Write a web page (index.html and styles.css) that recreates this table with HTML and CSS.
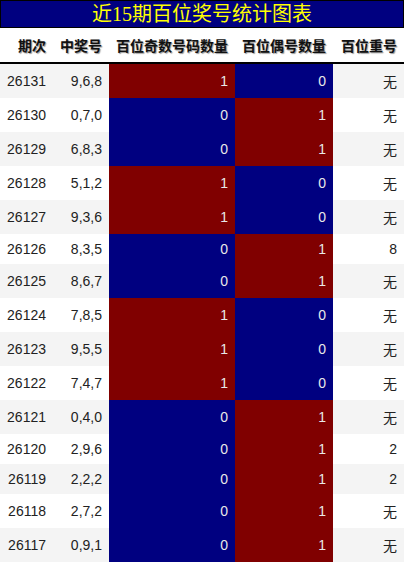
FILE: index.html
```html
<!DOCTYPE html>
<html lang="zh-CN">
<head>
  <meta charset="UTF-8">
  <meta name="viewport" content="width=device-width, initial-scale=1.0">
  <title>近15期百位奖号统计图表</title>
  <link rel="stylesheet" href="styles.css">
</head>
<body>

<div class="title">近15期百位奖号统计图表</div>
<table class="stats">
  <colgroup>
    <col class="col-issue">
    <col class="col-number">
    <col class="col-odd">
    <col class="col-even">
    <col class="col-repeat">
  </colgroup>
  <thead>
    <tr>
      <th>期次</th>
      <th>中奖号</th>
      <th>百位奇数号码数量</th>
      <th>百位偶号数量</th>
      <th>百位重号</th>
    </tr>
  </thead>
  <tbody id="rows"></tbody>
</table>

<script>
  // issue, winning number, repeat of hundreds digit
  const draws = [
    ['26131', '9,6,8', '无'],
    ['26130', '0,7,0', '无'],
    ['26129', '6,8,3', '无'],
    ['26128', '5,1,2', '无'],
    ['26127', '9,3,6', '无'],
    ['26126', '8,3,5', '8'],
    ['26125', '8,6,7', '无'],
    ['26124', '7,8,5', '无'],
    ['26123', '9,5,5', '无'],
    ['26122', '7,4,7', '无'],
    ['26121', '0,4,0', '无'],
    ['26120', '2,9,6', '2'],
    ['26119', '2,2,2', '2'],
    ['26118', '2,7,2', '无'],
    ['26117', '0,9,1', '无']
  ];

  const tbody = document.getElementById('rows');
  draws.forEach(([issue, number, repeat]) => {
    const hundreds = parseInt(number.split(',')[0], 10);
    const odd = hundreds % 2;
    const even = 1 - odd;
    const tr = document.createElement('tr');
    tr.innerHTML =
      `<td>${issue}</td>` +
      `<td>${number}</td>` +
      `<td class="${odd ? 'hit' : 'miss'}">${odd}</td>` +
      `<td class="${even ? 'hit' : 'miss'}">${even}</td>` +
      `<td>${repeat}</td>`;
    tbody.appendChild(tr);
  });
</script>

</body>
</html>
```

FILE: styles.css
```css
body {
  margin: 0;
  width: 404px;
  font-family: "Liberation Sans", Arial, "Noto Sans CJK SC", sans-serif;
  font-size: 14px;
  color: #222;
  background-color: #fff;
}
.title {
  box-sizing: border-box;
  height: 28px;
  line-height: 26px;
  border: 1px solid #000;
  background-color: #000080;
  color: #ffff00;
  text-align: center;
  font-family: "Liberation Serif", "Noto Sans CJK SC", serif;
  font-size: 20px;
}
.stats {
  width: 404px;
  table-layout: fixed;
  border-collapse: separate;
  border-spacing: 0;
}
.col-issue { width: 53px; }
.col-number { width: 56px; }
.col-odd { width: 126px; }
.col-even { width: 98px; }
.col-repeat { width: 71px; }
.stats th,
.stats td {
  padding: 7px 7px 7px 0;
  text-align: right;
  white-space: nowrap;
}
.stats th {
  font-weight: bold;
  color: #111;
  text-shadow: 1px 1px 1px #999;
  border-bottom: 2px solid #000;
  background-color: #fff;
}
.stats tbody tr:nth-child(odd) {
  background-color: #f4f4f4;
}
.stats td.hit {
  background-color: #800000;
  color: #e8e8e8;
}
.stats td.miss {
  background-color: #000080;
  color: #e8e8e8;
}
```
